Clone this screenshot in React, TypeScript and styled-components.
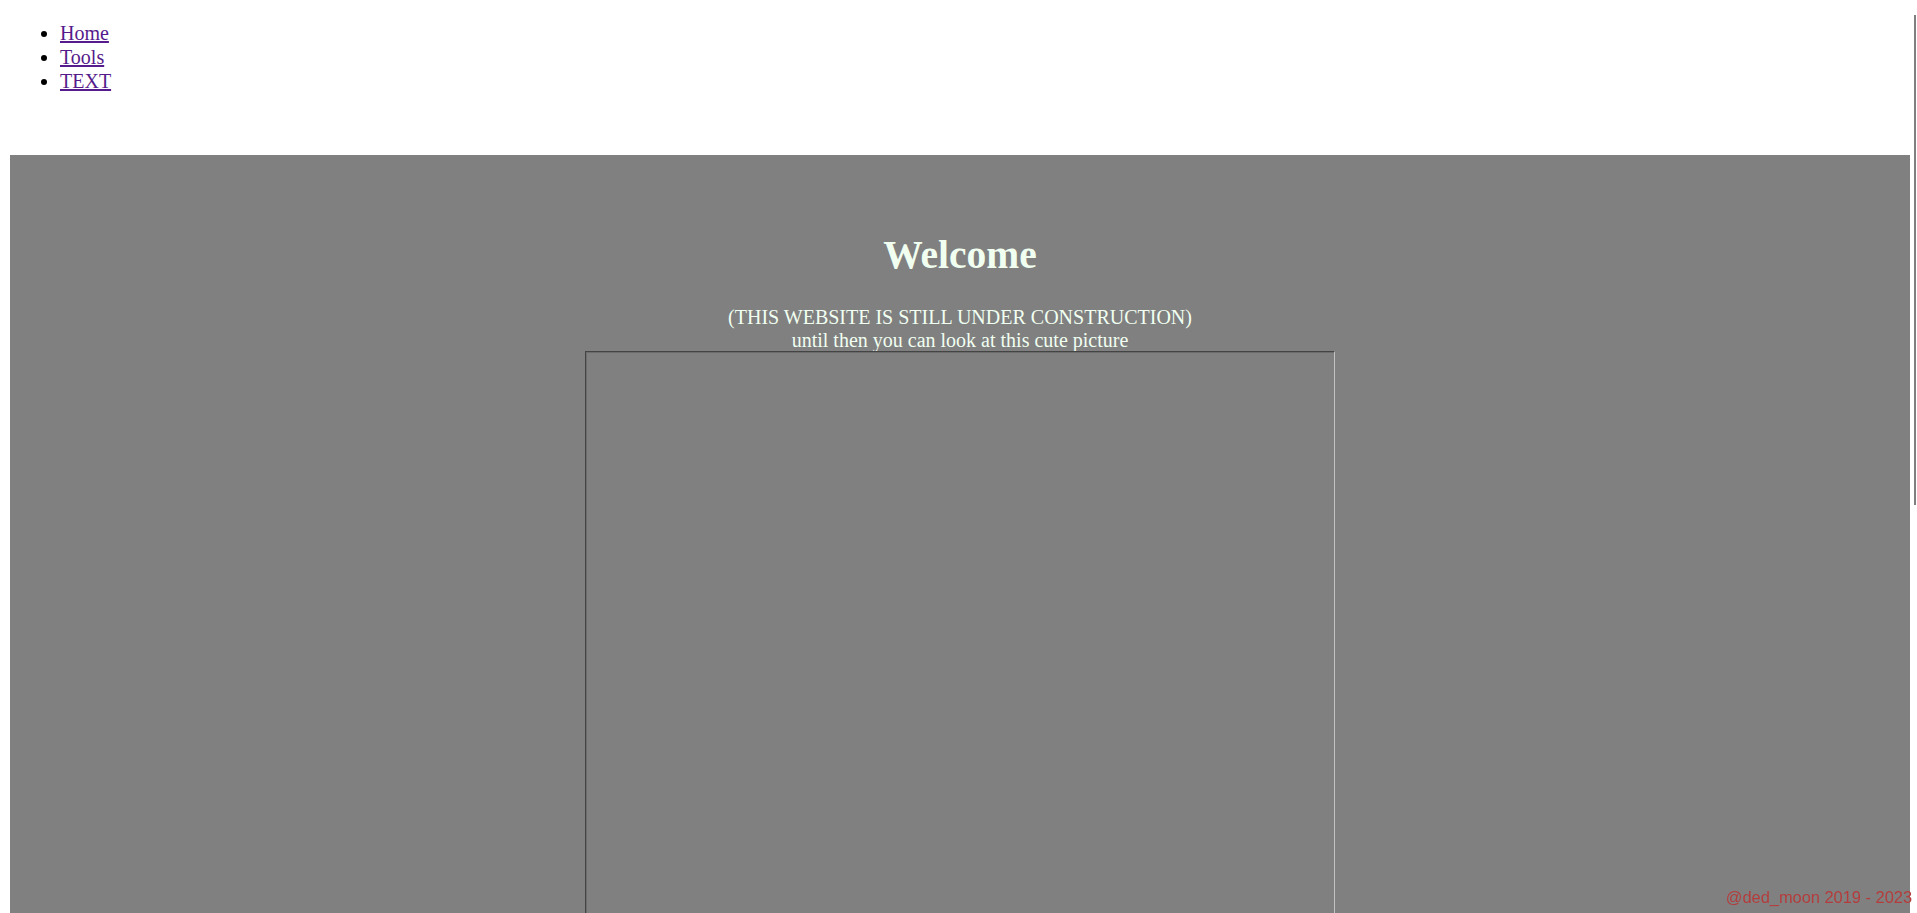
import React from "react";
import styled, { createGlobalStyle } from "styled-components";

const GlobalStyle = createGlobalStyle`
  html, body {
    margin: 0;
    padding: 0;
    background: #ffffff;
    font-family: "Liberation Serif", "Times New Roman", serif;
  }
  ::-webkit-scrollbar {
    width: 3px;
  }
  ::-webkit-scrollbar-track {
    background: #ffffff;
  }
  ::-webkit-scrollbar-thumb {
    background: #808080;
  }
`;

const Header = styled.header`
  height: 155px;
  box-sizing: border-box;
  padding: 21px 0 0 20px;
`;

const NavList = styled.ul`
  margin: 0;
  padding-left: 40px;
  font-size: 20px;
  line-height: 24px;
  list-style: disc;
`;

const NavLink = styled.a`
  color: #551a8b;
  text-decoration: underline;
`;

const Main = styled.main`
  width: 1900px;
  margin-left: 10px;
  background: #808080;
  padding: 51px 0 8px;
  box-sizing: border-box;
  display: flex;
  flex-direction: column;
  align-items: center;
  color: #f0fff0;
`;

const Title = styled.h1`
  margin: 27px 0 28px;
  font-size: 39.5px;
  line-height: 45px;
  font-weight: bold;
`;

const Subtitle = styled.p`
  margin: 0;
  font-size: 20px;
  line-height: 23px;
  text-align: center;
`;

const Picture = styled.div`
  width: 750px;
  height: 1280px;
  margin-top: -1px;
  box-sizing: border-box;
  border-style: solid;
  border-width: 1px;
  border-color: #444444 #c2c2c2 #c2c2c2 #444444;
  box-shadow: inset 1px 1px 0 #6c6c6c;
`;

const ScrollThumb = styled.div`
  position: fixed;
  top: 15px;
  right: 1px;
  width: 2px;
  height: 490px;
  background: #808080;
`;

const Credit = styled.footer`
  position: fixed;
  right: 5px;
  bottom: 7px;
  font-family: "Liberation Sans", Arial, sans-serif;
  font-size: 16.4px;
  line-height: 18px;
  color: #b43c3c;
`;

export default function App() {
  return (
    <>
      <GlobalStyle />
      <Header>
        <NavList>
          <li>
            <NavLink href="#">Home</NavLink>
          </li>
          <li>
            <NavLink href="#">Tools</NavLink>
          </li>
          <li>
            <NavLink href="#">TEXT</NavLink>
          </li>
        </NavList>
      </Header>
      <Main>
        <Title>Welcome</Title>
        <Subtitle>
          (THIS WEBSITE IS STILL UNDER CONSTRUCTION)
          <br />
          until then you can look at this cute picture
        </Subtitle>
        <Picture />
      </Main>
      <Credit>@ded_moon 2019 - 2023</Credit>
      <ScrollThumb />
    </>
  );
}
